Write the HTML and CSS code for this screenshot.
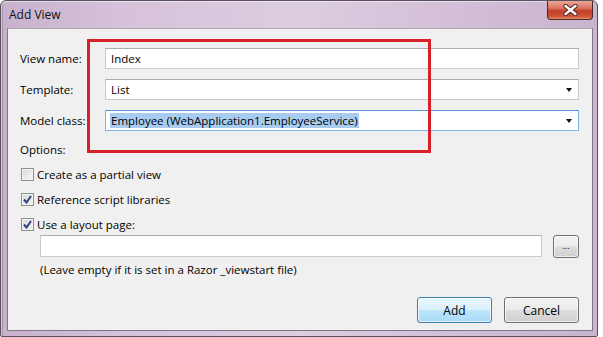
FILE: index.html
```html
<!DOCTYPE html>
<html lang="en">
<head>
  <meta charset="UTF-8" />
  <title>Add View</title>
  <link rel="stylesheet" href="styles.css">
</head>
<body>
  <div class="window">
    <div class="titlebar">
      <span class="title">Add View</span>
      <div class="close">
        <svg width="15" height="12" viewBox="0 0 15 12">
          <path d="M2.5 2 L12.5 10 M12.5 2 L2.5 10" stroke="#4e2019" stroke-width="4.2" stroke-linecap="round" />
          <path d="M2.5 2 L12.5 10 M12.5 2 L2.5 10" stroke="#ffffff" stroke-width="2.4" stroke-linecap="round" />
        </svg>
      </div>
    </div>

    <div class="content">
      <div class="form">
        <div class="label">View name:</div>
        <div class="field"><span class="value">Index</span></div>

        <div class="label">Template:</div>
        <div class="field select">
          <span class="value">List</span>
          <span class="arrow"></span>
        </div>

        <div class="label">Model class:</div>
        <div class="field select focused">
          <span class="value selected">Employee (WebApplication1.EmployeeService)</span>
          <span class="arrow"></span>
        </div>
      </div>

      <div class="options">Options:</div>

      <div class="check">
        <span class="box"></span>
        <span>Create as a partial view</span>
      </div>
      <div class="check">
        <span class="box checked">
          <svg width="9" height="9" viewBox="0 0 9 9"><path d="M1 4.5 L3.5 7.5 L8 1" fill="none" stroke="#2f437f" stroke-width="2" /></svg>
        </span>
        <span>Reference script libraries</span>
      </div>
      <div class="check">
        <span class="box checked">
          <svg width="9" height="9" viewBox="0 0 9 9"><path d="M1 4.5 L3.5 7.5 L8 1" fill="none" stroke="#2f437f" stroke-width="2" /></svg>
        </span>
        <span>Use a layout page:</span>
      </div>

      <div class="layout-row">
        <div class="field"></div>
        <div class="btn browse">...</div>
      </div>
      <div class="hint">(Leave empty if it is set in a Razor _viewstart file)</div>

      <div class="actions">
        <div class="btn default">Add</div>
        <div class="btn">Cancel</div>
      </div>
    </div>

    <!-- red annotation box drawn over the dialog -->
    <div class="callout"></div>
  </div>
</body>
</html>
```

FILE: styles.css
```css
body {
  margin: 0;
  background: #ffffff;
  font-family: 'Open Sans', 'Noto Sans', sans-serif;
  font-size: 11.5px;
  color: #000;
}

.window {
  position: relative;
  width: 598px;
  height: 337px;
  box-sizing: border-box;
  border: 1px solid #5a5060;
  border-radius: 6px 6px 2px 2px;
  background: linear-gradient(90deg, #c7b1cc 0%, #d6c2da 20%, #dccde0 50%, #d2bdd6 80%, #c9b4ce 100%);
  padding: 0 4px 5px 6px;
  display: flex;
  flex-direction: column;
  box-shadow: inset 1px 1px 0 rgba(255, 255, 255, 0.5), inset 3px 0 0 -1px #a593aa;
}

.titlebar {
  height: 27px;
  display: flex;
  align-items: flex-start;
  justify-content: space-between;
}
.title {
  margin-top: 5px;
  margin-left: 2px;
  font-size: 12px;
  color: #111;
}
.close {
  width: 46px;
  height: 19px;
  box-sizing: border-box;
  border: 1px solid #4a2a28;
  border-top: none;
  border-radius: 0 0 4px 4px;
  background: linear-gradient(#eaa898 0%, #d9735f 40%, #c03f2a 55%, #cd5539 85%, #e6896a 100%);
  display: flex;
  align-items: center;
  justify-content: center;
}

.content {
  flex: 1;
  background: #f0f0f0;
  border: 1px solid #7f7784;
  border-top-color: #b0a4b5;
  padding: 19px 13px 0 12px;
  display: flex;
  flex-direction: column;
}

.form {
  display: grid;
  grid-template-columns: 85px 1fr;
  grid-auto-rows: 21px;
  row-gap: 10px;
  align-items: center;
}
.label {
  line-height: 16px;
}

.field {
  height: 21px;
  box-sizing: border-box;
  background: #ffffff;
  border: 1px solid #c8cacf;
  border-top-color: #abadb3;
  display: flex;
  align-items: center;
  padding: 0 5px;
}
.field .value {
  line-height: 15px;
}
.select {
  justify-content: space-between;
  padding-right: 6px;
}
.arrow {
  width: 0;
  height: 0;
  border-left: 3.5px solid transparent;
  border-right: 3.5px solid transparent;
  border-top: 4px solid #111;
}
.focused {
  border-color: #7eb4ea;
  border-top-color: #5794d4;
  padding-left: 4px;
}
.selected {
  background: #a8ccef;
  padding: 0 1px;
}

.options {
  margin-top: 11px;
  line-height: 16px;
}

.check {
  display: flex;
  align-items: center;
  height: 17px;
  margin-top: 8px;
  line-height: 16px;
}
.check:first-of-type {
  margin-top: 6px;
}
.box {
  width: 13px;
  height: 13px;
  box-sizing: border-box;
  border: 1px solid #8e8f8f;
  background: linear-gradient(135deg, #d8d8d8, #f6f6f6);
  box-shadow: inset 0 0 0 1px #f4f4f4;
  margin: 0 3px 0 1px;
  display: flex;
  align-items: center;
  justify-content: center;
}

.layout-row {
  display: flex;
  gap: 11px;
  margin: 2px 0 0 20px;
}
.layout-row .field {
  flex: 1;
  height: 22px;
}

.hint {
  margin: 4px 0 0 20px;
  line-height: 16px;
}

.actions {
  margin-top: auto;
  margin-bottom: 7px;
  display: flex;
  justify-content: flex-end;
  gap: 12px;
}

.btn {
  width: 75px;
  height: 26px;
  box-sizing: border-box;
  border: 1px solid #707070;
  border-radius: 3px;
  background: linear-gradient(#f2f2f2 0%, #ebebeb 48%, #dddddd 52%, #cfcfcf 100%);
  box-shadow: inset 0 0 0 1px rgba(255, 255, 255, 0.7);
  display: flex;
  align-items: center;
  justify-content: center;
  font-size: 12px;
}
.btn.default {
  border-color: #3c7fb1;
  background: linear-gradient(#eaf6fd 0%, #d9f0fc 48%, #bee6fd 52%, #a7d9f5 100%);
}
.btn.browse {
  width: 26px;
  height: 23px;
  font-size: 9px;
  padding-bottom: 2px;
}

.callout {
  position: absolute;
  left: 86px;
  top: 38px;
  width: 344px;
  height: 114px;
  box-sizing: border-box;
  border: 3px solid #d8202b;
}
```
